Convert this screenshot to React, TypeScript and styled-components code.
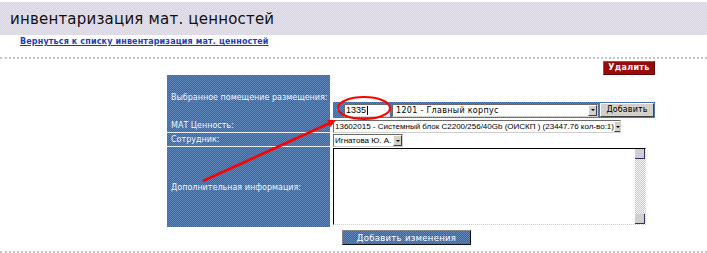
import React from "react";
import styled, { createGlobalStyle } from "styled-components";

const GlobalStyle = createGlobalStyle`
  html, body { margin: 0; padding: 0; background: #ffffff; }
  body { font-family: "DejaVu Sans", Verdana, sans-serif; }
`;

const Page = styled.div`
  position: relative;
  width: 707px;
  height: 253px;
  overflow: hidden;
`;

const Header = styled.div`
  margin-top: 2px;
  height: 33px;
  display: flex;
  align-items: center;
  padding-left: 10px;
  background-color: #d6e0e9;
  background-image: conic-gradient(#c6dbe6 25%, #e6e3ef 0 50%, #c6dbe6 0 75%, #e6e3ef 0);
  background-size: 2px 2px;
`;

const Title = styled.h1`
  margin: 0;
  font-family: "DejaVu Sans", Verdana, sans-serif;
  font-weight: normal;
  font-size: 15px;
  color: #111111;
  letter-spacing: 0.2px;
  padding-top: 1px;
`;

const LinkRow = styled.div`
  height: 22px;
  padding-left: 20px;
  padding-top: 2px;
  box-sizing: border-box;
  font-size: 8px;
  line-height: 10px;
`;

const BackLink = styled.a`
  font-family: "DejaVu Sans", Verdana, sans-serif;
  font-weight: bold;
  font-size: 8px;
  color: #1a3fb8;
  text-decoration: underline;
  letter-spacing: 0.15px;
`;

const Box = styled.div`
  border-top: 2px dotted #c4c4c4;
  border-bottom: 2px dotted #c4c4c4;
`;

const DeleteRow = styled.div`
  display: flex;
  justify-content: flex-end;
  padding: 2px 52px 0 0;
`;

const DangerButton = styled.button`
  width: 52px;
  height: 14px;
  padding: 0;
  border: 1px solid #5a0000;
  border-top-color: #c04040;
  border-left-color: #c04040;
  background: #9a0a0a;
  color: #ffffff;
  font-family: "DejaVu Sans", Verdana, sans-serif;
  font-weight: bold;
  font-size: 8px;
  letter-spacing: 0.3px;
  line-height: 12px;
`;

const FormGrid = styled.div`
  margin-left: 167px;
  width: 488px;
  display: grid;
  grid-template-columns: 163px 322px;
  column-gap: 3px;
  grid-template-rows: 44px 14px 14px 80px;
`;

const blueDither = `
  background-color: #4872a8;
  background-image: conic-gradient(#3c66a0 25%, #6088bb 0 50%, #3c66a0 0 75%, #5a84b8 0);
  background-size: 2px 2px;
`;

const LabelCell = styled.div<{ $sep?: boolean }>`
  ${blueDither}
  display: flex;
  align-items: center;
  padding-left: 4px;
  box-sizing: border-box;
  color: #f2f6fb;
  font-family: "DejaVu Sans", Verdana, sans-serif;
  font-size: 8px;
  letter-spacing: 0;
  white-space: nowrap;
  border-bottom: ${(p) => (p.$sep ? "1px solid #eef2f8" : "0")};
`;

const FieldCell = styled.div<{ $bottom?: boolean }>`
  display: flex;
  flex-direction: column;
  justify-content: ${(p) => (p.$bottom ? "flex-end" : "flex-start")};
  align-items: flex-start;
  padding-top: ${(p) => (p.$bottom ? "0" : "1px")};
  box-sizing: border-box;
`;

const Strip = styled.div`
  ${blueDither}
  width: 322px;
  height: 16px;
  display: flex;
  align-items: center;
  gap: 2px;
  padding-left: 3px;
  box-sizing: border-box;
  margin-bottom: 1px;
`;

const Chevron = styled.span`
  width: 6px;
  color: #ffffff;
  font-size: 8px;
  line-height: 10px;
`;

const TextInput = styled.div`
  width: 46px;
  height: 13px;
  box-sizing: border-box;
  background: #ffffff;
  border: 1px solid #6a6a6a;
  border-right-color: #d8d8d8;
  border-bottom-color: #d8d8d8;
  font-family: "Liberation Sans", Arial, sans-serif;
  font-size: 9px;
  line-height: 11px;
  padding-left: 1px;
  color: #000;
  display: flex;
  align-items: center;
`;

const Caret = styled.span`
  display: inline-block;
  width: 1px;
  height: 9px;
  background: #000;
  margin-left: 1px;
`;

const SelectBox = styled.div<{ $w: number }>`
  width: ${(p) => p.$w}px;
  height: 13px;
  box-sizing: border-box;
  background: #ffffff;
  border: 1px solid #6a6a6a;
  border-right-color: #cfcfcf;
  border-bottom-color: #cfcfcf;
  display: flex;
  align-items: center;
  justify-content: space-between;
  overflow: hidden;
`;

const SelectText = styled.span<{ $verdana?: boolean }>`
  font-family: ${(p) =>
    p.$verdana ? '"DejaVu Sans", Verdana, sans-serif' : '"Liberation Sans", Arial, sans-serif'};
  font-size: 8px;
  letter-spacing: ${(p) => (p.$verdana ? "0.3px" : "0")};
  color: #000;
  white-space: nowrap;
  padding-left: ${(p) => (p.$verdana ? "3px" : "1px")};
  line-height: 11px;
`;

const ArrowBtn = styled.span`
  width: 9px;
  height: 11px;
  box-sizing: border-box;
  background: #d4d0c8;
  border: 1px solid #ffffff;
  border-right-color: #404040;
  border-bottom-color: #404040;
  display: flex;
  align-items: center;
  justify-content: center;
  flex-shrink: 0;
  &::after {
    content: "";
    border-left: 2px solid transparent;
    border-right: 2px solid transparent;
    border-top: 2px solid #000;
  }
`;

const GreyButton = styled.button`
  width: 54px;
  height: 14px;
  padding: 0;
  background: #d4d0c8;
  border: 1px solid #ffffff;
  border-right-color: #404040;
  border-bottom-color: #404040;
  font-family: "DejaVu Sans", Verdana, sans-serif;
  font-size: 8px;
  color: #000;
  line-height: 12px;
  letter-spacing: 0.1px;
`;

const TextArea = styled.div`
  width: 313px;
  height: 77px;
  box-sizing: border-box;
  background: #ffffff;
  border-left: 1px solid #000;
  border-top: 1px solid #000;
  border-right: 1px dotted #d8d4a0;
  border-bottom: 1px dotted #d8d4a0;
  display: flex;
  justify-content: flex-end;
`;

const ScrollBar = styled.div`
  width: 10px;
  display: flex;
  flex-direction: column;
  justify-content: space-between;
  background-color: #ececec;
  background-image: conic-gradient(#d8c8c8 25%, #f4f4f4 0 50%, #c8c8c8 0 75%, #f4f4f4 0);
  background-size: 2px 2px;
`;

const ScrollBtn = styled.span`
  height: 9px;
  background: #cfcfcf;
  border-right: 1px solid #30306a;
  border-bottom: 1px solid #30306a;
`;

const SubmitRow = styled.div`
  display: flex;
  padding: 3px 0 6px 342px;
`;

const SubmitButton = styled.button`
  ${blueDither}
  width: 129px;
  height: 15px;
  padding: 0;
  border: 1px solid #111;
  border-top-color: #888;
  border-left-color: #888;
  color: #ffffff;
  font-family: "DejaVu Sans", Verdana, sans-serif;
  font-size: 8.5px;
  letter-spacing: 0.3px;
  line-height: 12px;
`;

const Annotation = styled.svg`
  position: absolute;
  left: 0;
  top: 0;
  pointer-events: none;
`;

export default function App() {
  return (
    <>
      <GlobalStyle />
      <Page>
        <Header>
          <Title>инвентаризация мат. ценностей</Title>
        </Header>
        <LinkRow>
          <BackLink href="#">Вернуться к списку инвентаризация мат. ценностей</BackLink>
        </LinkRow>
        <Box>
          <DeleteRow>
            <DangerButton>Удалить</DangerButton>
          </DeleteRow>
          <FormGrid>
            <LabelCell>Выбранное помещение размещения:</LabelCell>
            <FieldCell $bottom>
              <Strip>
                <Chevron>‹</Chevron>
                <TextInput>
                  1335
                  <Caret />
                </TextInput>
                <SelectBox $w={206}>
                  <SelectText $verdana>1201 - Главный корпус</SelectText>
                  <ArrowBtn />
                </SelectBox>
                <GreyButton>Добавить</GreyButton>
              </Strip>
            </FieldCell>
            <LabelCell $sep>МАТ Ценность:</LabelCell>
            <FieldCell>
              <SelectBox $w={288}>
                <SelectText>
                  13602015 - Системный блок C2200/256/40Gb (ОИСКП ) (23447.76 кол-во:1)
                </SelectText>
                <ArrowBtn />
              </SelectBox>
            </FieldCell>
            <LabelCell $sep>Сотрудник:</LabelCell>
            <FieldCell>
              <SelectBox $w={70}>
                <SelectText>Игнатова Ю. А.</SelectText>
                <ArrowBtn />
              </SelectBox>
            </FieldCell>
            <LabelCell>Дополнительная информация:</LabelCell>
            <FieldCell>
              <TextArea>
                <ScrollBar>
                  <ScrollBtn />
                  <ScrollBtn />
                </ScrollBar>
              </TextArea>
            </FieldCell>
          </FormGrid>
          <SubmitRow>
            <SubmitButton>Добавить изменения</SubmitButton>
          </SubmitRow>
        </Box>
        <Annotation width="707" height="253" viewBox="0 0 707 253">
          <ellipse cx="364" cy="108" rx="26" ry="11" fill="none" stroke="#ff0000" strokeWidth="2" />
          <line x1="203" y1="181" x2="330" y2="123" stroke="#ff0000" strokeWidth="2.5" />
          <polygon points="336,120 330.4,126.9 327,119.7" fill="#ff0000" />
        </Annotation>
      </Page>
    </>
  );
}
